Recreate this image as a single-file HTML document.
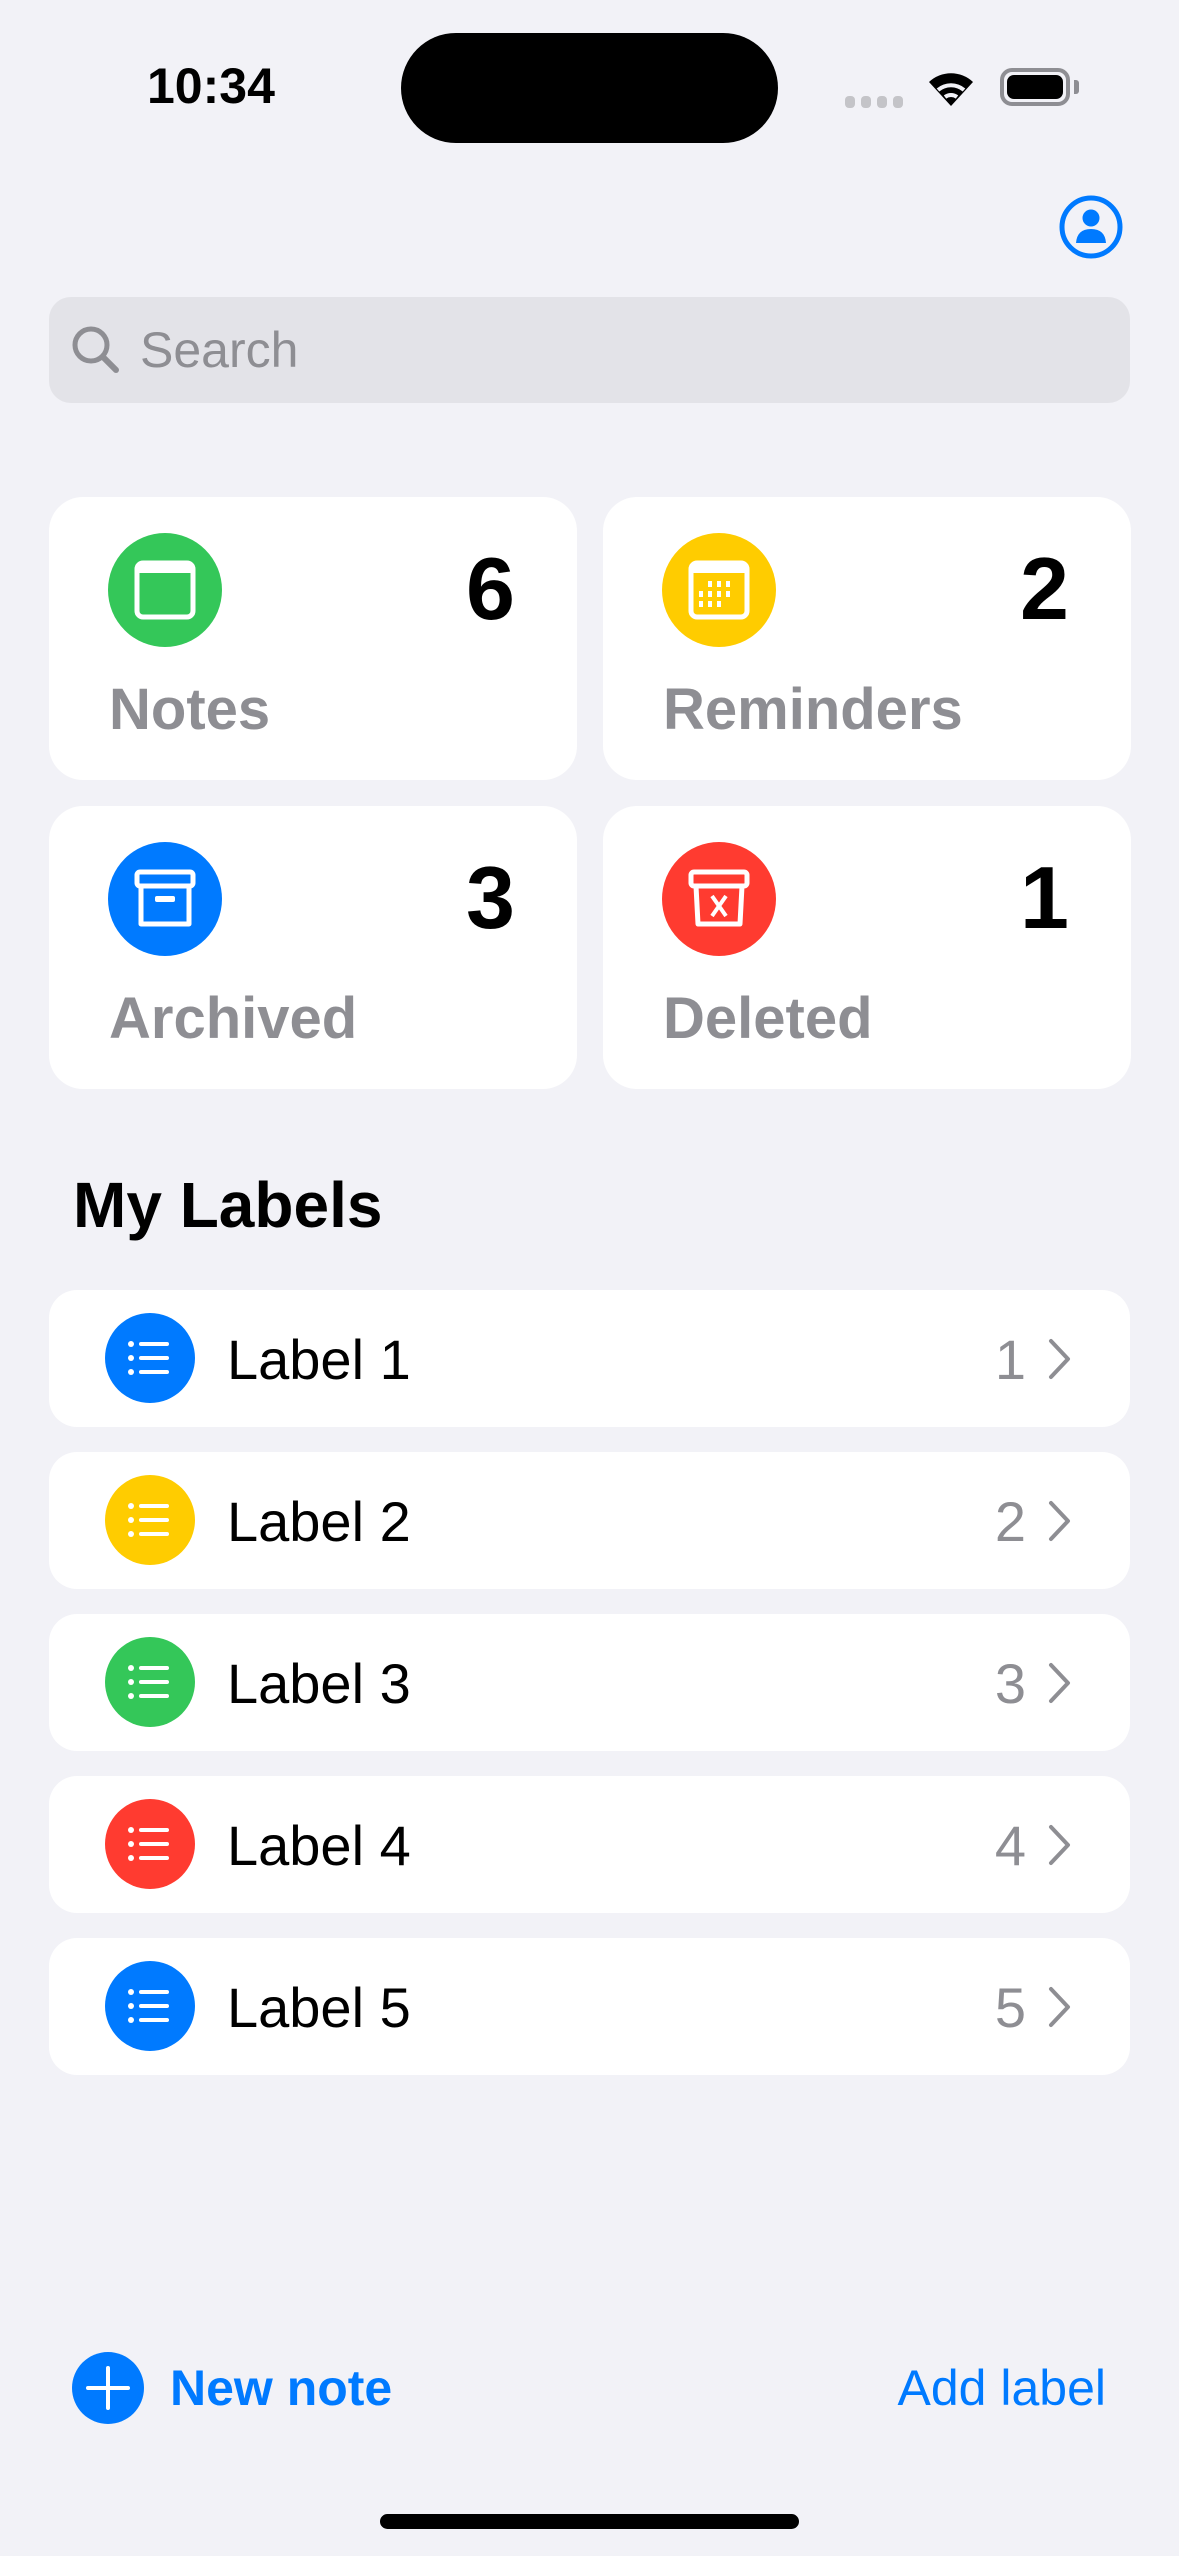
<!DOCTYPE html>
<html><head><meta charset="utf-8"><style>
*{margin:0;padding:0;box-sizing:border-box}
body{width:1179px;height:2556px;background:#f2f2f7;position:relative;overflow:hidden;font-family:"Liberation Sans",sans-serif}
.a{position:absolute}
.card{position:absolute;width:528px;height:283px;background:#fff;border-radius:34px}
.ic{position:absolute;left:59px;top:36px;width:114px;height:114px;border-radius:50%}
.num{position:absolute;right:62px;top:42px;font-size:88px;font-weight:bold;color:#000;line-height:100px}
.lab{position:absolute;left:60px;top:178px;font-size:58px;font-weight:bold;color:#8e8e93;line-height:70px}
.row{position:absolute;left:49px;width:1081px;height:137px;background:#fff;border-radius:28px}
.row .c{position:absolute;left:56px;top:23px;width:90px;height:90px;border-radius:50%}
.row .t{position:absolute;left:178px;top:38px;font-size:56px;line-height:64px;color:#000}
.row .n{position:absolute;right:104px;top:38px;font-size:56px;line-height:64px;color:#8e8e93}
.row svg.ch{position:absolute;right:58px;top:48px}
</style></head><body>
<div class="a" style="left:147px;top:58px;font-size:50px;font-weight:bold;line-height:56px">10:34</div>
<div class="a" style="left:401px;top:33px;width:377px;height:110px;background:#000;border-radius:55px"></div>
<div class="a" style="left:845px;top:96px;width:60px;height:12px">
<div class="a" style="left:0;width:10px;height:12px;background:#c4c4c8;border-radius:4px"></div>
<div class="a" style="left:16px;width:10px;height:12px;background:#c4c4c8;border-radius:4px"></div>
<div class="a" style="left:32px;width:10px;height:12px;background:#c4c4c8;border-radius:4px"></div>
<div class="a" style="left:48px;width:10px;height:12px;background:#c4c4c8;border-radius:4px"></div>
</div>
<svg class="a" style="left:925px;top:68px" width="52" height="40" viewBox="0 0 52 40"><path d="M26 38 L4 14 A32 32 0 0 1 48 14 Z" fill="#000"/><path d="M13 22 A20 20 0 0 1 39 22" stroke="#f2f2f7" stroke-width="4" fill="none"/><path d="M20 29 A10 10 0 0 1 32 29" stroke="#f2f2f7" stroke-width="4" fill="none"/></svg>
<div class="a" style="left:1000px;top:68px;width:70px;height:38px;border:4px solid #8e8e93;border-radius:12px;padding:3px"><div style="width:100%;height:100%;background:#000;border-radius:7px"></div></div>
<div class="a" style="left:1074px;top:80px;width:5px;height:14px;background:#8e8e93;border-radius:0 3px 3px 0"></div>
<svg class="a" style="left:1059px;top:195px" width="64" height="64" viewBox="0 0 64 64"><circle cx="32" cy="32" r="29" fill="none" stroke="#007aff" stroke-width="5"/><circle cx="32" cy="23" r="8.5" fill="#007aff"/><path d="M17 48 Q18 34 32 34 Q46 34 47 48 Z" fill="#007aff"/></svg>
<div class="a" style="left:49px;top:297px;width:1081px;height:106px;background:#e3e3e8;border-radius:22px"></div>
<svg class="a" style="left:70px;top:324px" width="52" height="52" viewBox="0 0 52 52"><circle cx="21" cy="21" r="16" fill="none" stroke="#8e8e93" stroke-width="5"/><path d="M33 33 L46 46" stroke="#8e8e93" stroke-width="6" stroke-linecap="round"/></svg>
<div class="a" style="left:140px;top:321px;font-size:50px;line-height:58px;color:#8e8e93">Search</div>

<div class="card" style="left:49px;top:497px"><div class="ic" style="background:#34c759"><svg width="114" height="114" viewBox="0 0 114 114"><rect x="29" y="30" width="56" height="54" rx="6" fill="none" stroke="#fff" stroke-width="5"/><rect x="29" y="30" width="56" height="10" fill="#fff"/></svg></div><div class="num">6</div><div class="lab">Notes</div></div>
<div class="card" style="left:603px;top:497px"><div class="ic" style="background:#ffcc00"><svg width="114" height="114" viewBox="0 0 114 114"><rect x="29" y="30" width="56" height="54" rx="6" fill="none" stroke="#fff" stroke-width="5"/><rect x="29" y="30" width="56" height="10" fill="#fff"/><g fill="#fff"><rect x="46" y="48" width="4" height="6"/><rect x="55" y="48" width="4" height="6"/><rect x="64" y="48" width="4" height="6"/><rect x="37" y="58" width="4" height="6"/><rect x="46" y="58" width="4" height="6"/><rect x="55" y="58" width="4" height="6"/><rect x="64" y="58" width="4" height="6"/><rect x="37" y="68" width="4" height="6"/><rect x="46" y="68" width="4" height="6"/><rect x="55" y="68" width="4" height="6"/></g></svg></div><div class="num">2</div><div class="lab">Reminders</div></div>
<div class="card" style="left:49px;top:806px"><div class="ic" style="background:#007aff"><svg width="114" height="114" viewBox="0 0 114 114"><rect x="29" y="30" width="56" height="14" rx="3" fill="none" stroke="#fff" stroke-width="5"/><path d="M33 44 V82 H81 V44" fill="none" stroke="#fff" stroke-width="5" stroke-linejoin="round"/><rect x="47" y="54" width="20" height="6" rx="2" fill="#fff"/></svg></div><div class="num">3</div><div class="lab">Archived</div></div>
<div class="card" style="left:603px;top:806px"><div class="ic" style="background:#ff3b30"><svg width="114" height="114" viewBox="0 0 114 114"><rect x="29" y="30" width="56" height="14" rx="3" fill="none" stroke="#fff" stroke-width="5"/><path d="M34 44 L36 82 H78 L80 44" fill="none" stroke="#fff" stroke-width="5" stroke-linejoin="round"/><path d="M50 54 L64 74 M64 54 L50 74" stroke="#fff" stroke-width="4"/></svg></div><div class="num">1</div><div class="lab">Deleted</div></div>

<div class="a" style="left:73px;top:1168px;font-size:64px;font-weight:bold;line-height:74px">My Labels</div>

<div class="row" style="top:1290px"><div class="c" style="background:#007aff"><svg width="90" height="90" viewBox="0 0 90 90"><g fill="#fff"><circle cx="26" cy="31" r="3"/><circle cx="26" cy="45" r="3"/><circle cx="26" cy="59" r="3"/><rect x="34" y="29" width="30" height="4" rx="2"/><rect x="34" y="43" width="30" height="4" rx="2"/><rect x="34" y="57" width="30" height="4" rx="2"/></g></svg></div><div class="t">Label 1</div><div class="n">1</div><svg class="ch" width="24" height="42" viewBox="0 0 24 42"><path d="M3 3 L20 21 L3 39" fill="none" stroke="#8e8e93" stroke-width="4" stroke-linecap="round" stroke-linejoin="round"/></svg></div>
<div class="row" style="top:1452px"><div class="c" style="background:#ffcc00"><svg width="90" height="90" viewBox="0 0 90 90"><g fill="#fff"><circle cx="26" cy="31" r="3"/><circle cx="26" cy="45" r="3"/><circle cx="26" cy="59" r="3"/><rect x="34" y="29" width="30" height="4" rx="2"/><rect x="34" y="43" width="30" height="4" rx="2"/><rect x="34" y="57" width="30" height="4" rx="2"/></g></svg></div><div class="t">Label 2</div><div class="n">2</div><svg class="ch" width="24" height="42" viewBox="0 0 24 42"><path d="M3 3 L20 21 L3 39" fill="none" stroke="#8e8e93" stroke-width="4" stroke-linecap="round" stroke-linejoin="round"/></svg></div>
<div class="row" style="top:1614px"><div class="c" style="background:#34c759"><svg width="90" height="90" viewBox="0 0 90 90"><g fill="#fff"><circle cx="26" cy="31" r="3"/><circle cx="26" cy="45" r="3"/><circle cx="26" cy="59" r="3"/><rect x="34" y="29" width="30" height="4" rx="2"/><rect x="34" y="43" width="30" height="4" rx="2"/><rect x="34" y="57" width="30" height="4" rx="2"/></g></svg></div><div class="t">Label 3</div><div class="n">3</div><svg class="ch" width="24" height="42" viewBox="0 0 24 42"><path d="M3 3 L20 21 L3 39" fill="none" stroke="#8e8e93" stroke-width="4" stroke-linecap="round" stroke-linejoin="round"/></svg></div>
<div class="row" style="top:1776px"><div class="c" style="background:#ff3b30"><svg width="90" height="90" viewBox="0 0 90 90"><g fill="#fff"><circle cx="26" cy="31" r="3"/><circle cx="26" cy="45" r="3"/><circle cx="26" cy="59" r="3"/><rect x="34" y="29" width="30" height="4" rx="2"/><rect x="34" y="43" width="30" height="4" rx="2"/><rect x="34" y="57" width="30" height="4" rx="2"/></g></svg></div><div class="t">Label 4</div><div class="n">4</div><svg class="ch" width="24" height="42" viewBox="0 0 24 42"><path d="M3 3 L20 21 L3 39" fill="none" stroke="#8e8e93" stroke-width="4" stroke-linecap="round" stroke-linejoin="round"/></svg></div>
<div class="row" style="top:1938px"><div class="c" style="background:#007aff"><svg width="90" height="90" viewBox="0 0 90 90"><g fill="#fff"><circle cx="26" cy="31" r="3"/><circle cx="26" cy="45" r="3"/><circle cx="26" cy="59" r="3"/><rect x="34" y="29" width="30" height="4" rx="2"/><rect x="34" y="43" width="30" height="4" rx="2"/><rect x="34" y="57" width="30" height="4" rx="2"/></g></svg></div><div class="t">Label 5</div><div class="n">5</div><svg class="ch" width="24" height="42" viewBox="0 0 24 42"><path d="M3 3 L20 21 L3 39" fill="none" stroke="#8e8e93" stroke-width="4" stroke-linecap="round" stroke-linejoin="round"/></svg></div>

<svg class="a" style="left:72px;top:2352px" width="72" height="72" viewBox="0 0 72 72"><circle cx="36" cy="36" r="36" fill="#007aff"/><path d="M36 16 V56 M16 36 H56" stroke="#fff" stroke-width="4" stroke-linecap="round"/></svg>
<div class="a" style="left:170px;top:2358px;font-size:50px;font-weight:bold;color:#007aff;line-height:60px">New note</div>
<div class="a" style="right:73px;top:2358px;font-size:50px;color:#007aff;line-height:60px">Add label</div>
<div class="a" style="left:380px;top:2514px;width:419px;height:15px;background:#000;border-radius:8px"></div>
</body></html>
